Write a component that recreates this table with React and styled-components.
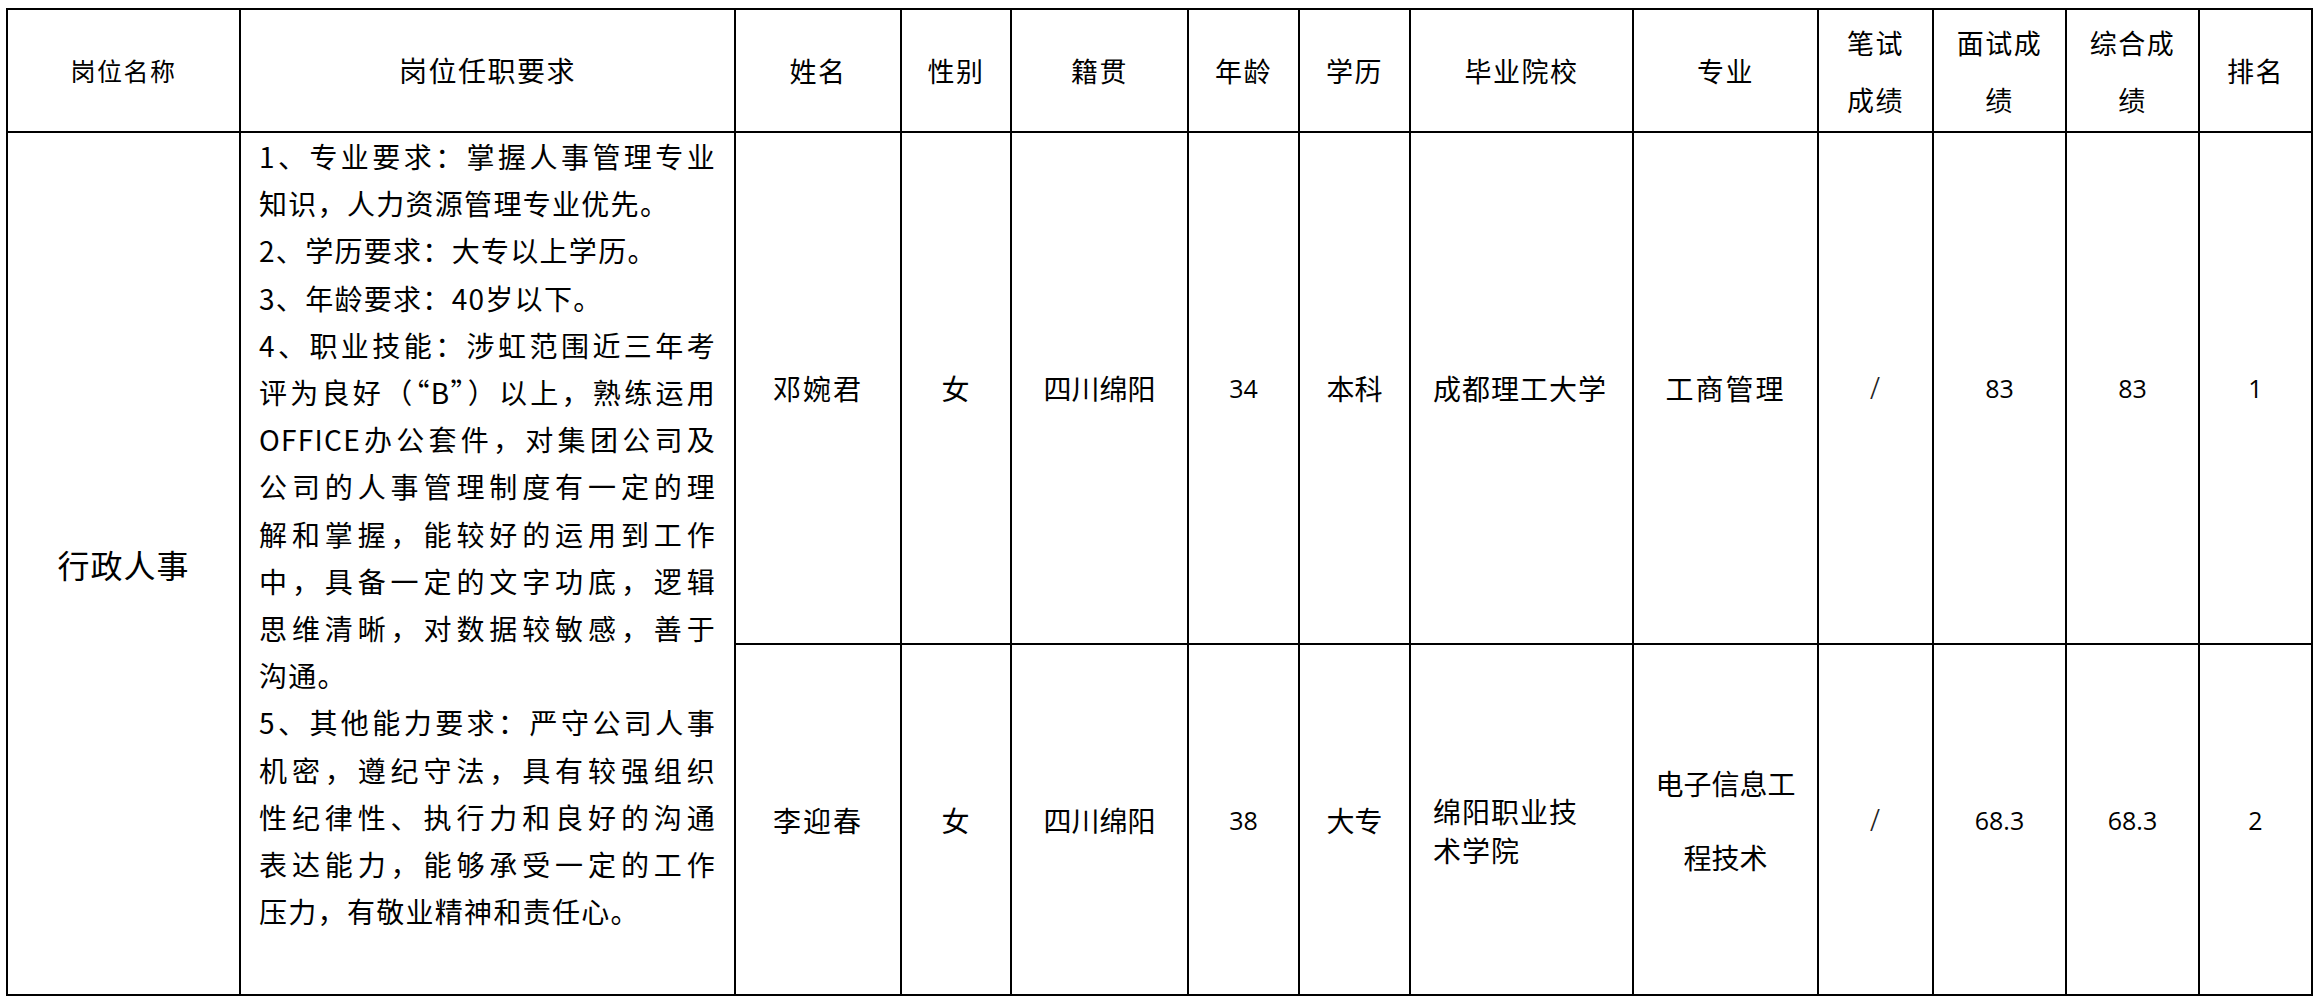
import React from "react";
import styled, { createGlobalStyle } from "styled-components";

const GlobalStyle = createGlobalStyle`
  html, body {
    margin: 0;
    padding: 0;
    background: #fff;
  }
  body {
    font-family: "Noto Sans CJK SC", "Noto Sans", sans-serif;
    color: #000;
  }
`;

// column widths between the 2px rules
const cols = [231, 493, 164, 108, 175, 109, 109, 221, 183, 113, 131, 131, 111];

const Page = styled.div`
  padding: 8px 0 0 6px;
`;

const Table = styled.div`
  display: grid;
  grid-template-columns: ${cols.map((c) => c + "px").join(" ")};
  grid-template-rows: 121px 510px 349px;
  gap: 2px;
  padding: 2px;
  background: #000;
  width: max-content;
`;

const Cell = styled.div`
  background: #fff;
  display: flex;
  flex-direction: column;
  align-items: center;
  justify-content: center;
  text-align: center;
  font-size: ${(p) => p.size || 28}px;
  line-height: ${(p) => p.lh || 40}px;
  letter-spacing: ${(p) => (p.spacing === undefined ? 1 : p.spacing)}px;
  grid-row: ${(p) => p.rows || "auto"};
  padding-top: ${(p) => p.padTop || 0}px;
  box-sizing: border-box;
`;

const HeadCell = styled(Cell)`
  font-size: ${(p) => p.size || 27}px;
  letter-spacing: 1.5px;
`;

const SchoolCell = styled(Cell)`
  align-items: flex-start;
  text-align: left;
  padding-left: 22px;
`;

const ReqCell = styled.div`
  background: #fff;
  grid-row: 2 / span 2;
  padding: 0 18px 0 18px;
  font-size: 28px;
  line-height: 47.2px;
  letter-spacing: 1.3px;
`;

const ReqLine = styled.div`
  text-align: justify;
  text-align-last: ${(p) => (p.full ? "justify" : "left")};
  white-space: nowrap;
`;

const Num = styled.span`
  font-family: "Open Sans", "Noto Sans", sans-serif;
  font-size: 25px;
  letter-spacing: 0;
`;

const Slash = styled.span`
  font-family: "Liberation Serif", serif;
  font-size: 34px;
  font-weight: 300;
  color: #222;
`;

const headers = [
  { text: ["岗位名称"], size: 25 },
  { text: ["岗位任职要求"], size: 28 },
  { text: ["姓名"] },
  { text: ["性别"] },
  { text: ["籍贯"] },
  { text: ["年龄"] },
  { text: ["学历"] },
  { text: ["毕业院校"] },
  { text: ["专业"] },
  { text: ["笔试", "成绩"] },
  { text: ["面试成", "绩"] },
  { text: ["综合成", "绩"] },
  { text: ["排名"] },
];

const requirements = [
  ["1、专业要求：掌握人事管理专业", true],
  ["知识，人力资源管理专业优先。", false],
  ["2、学历要求：大专以上学历。", false],
  ["3、年龄要求：40岁以下。", false],
  ["4、职业技能：涉虹范围近三年考", true],
  ["评为良好（“B”）以上，熟练运用", true],
  ["OFFICE办公套件，对集团公司及", true],
  ["公司的人事管理制度有一定的理", true],
  ["解和掌握，能较好的运用到工作", true],
  ["中，具备一定的文字功底，逻辑", true],
  ["思维清晰，对数据较敏感，善于", true],
  ["沟通。", false],
  ["5、其他能力要求：严守公司人事", true],
  ["机密，遵纪守法，具有较强组织", true],
  ["性纪律性、执行力和良好的沟通", true],
  ["表达能力，能够承受一定的工作", true],
  ["压力，有敬业精神和责任心。", false],
];

const people = [
  {
    name: "邓婉君",
    sex: "女",
    origin: "四川绵阳",
    age: "34",
    edu: "本科",
    school: ["成都理工大学"],
    schoolLh: 40,
    schoolPad: 0,
    major: ["工商管理"],
    majorLh: 40,
    interview: "83",
    total: "83",
    rank: "1",
  },
  {
    name: "李迎春",
    sex: "女",
    origin: "四川绵阳",
    age: "38",
    edu: "大专",
    school: ["绵阳职业技", "术学院"],
    schoolLh: 39,
    schoolPad: 23,
    major: ["电子信息工", "程技术"],
    majorLh: 74,
    interview: "68.3",
    total: "68.3",
    rank: "2",
  },
];

const Lines = ({ items }) =>
  items.map((t, i) => (
    <React.Fragment key={i}>
      {i > 0 && <br />}
      {t}
    </React.Fragment>
  ));

const App = () => {
  return (
    <Page>
      <GlobalStyle />
      <Table>
        {headers.map((h, i) => (
          <HeadCell key={i} size={h.size} lh={57}>
            <div>
              <Lines items={h.text} />
            </div>
          </HeadCell>
        ))}

        <Cell rows="2 / span 2" size={32} spacing={1}>
          行政人事
        </Cell>
        <ReqCell>
          {requirements.map(([text, full], i) => (
            <ReqLine key={i} full={full}>
              {text}
            </ReqLine>
          ))}
        </ReqCell>

        {people.map((p) => (
          <React.Fragment key={p.name}>
            <Cell spacing={2}>{p.name}</Cell>
            <Cell>{p.sex}</Cell>
            <Cell spacing={0}>{p.origin}</Cell>
            <Cell>
              <Num>{p.age}</Num>
            </Cell>
            <Cell spacing={0}>{p.edu}</Cell>
            <SchoolCell lh={p.schoolLh} padTop={p.schoolPad}>
              <div>
                <Lines items={p.school} />
              </div>
            </SchoolCell>
            <Cell lh={p.majorLh} spacing={p.major.length > 1 ? 0 : 2}>
              <div>
                <Lines items={p.major} />
              </div>
            </Cell>
            <Cell>
              <Slash>/</Slash>
            </Cell>
            <Cell>
              <Num>{p.interview}</Num>
            </Cell>
            <Cell>
              <Num>{p.total}</Num>
            </Cell>
            <Cell>
              <Num>{p.rank}</Num>
            </Cell>
          </React.Fragment>
        ))}
      </Table>
    </Page>
  );
};

export default App;
